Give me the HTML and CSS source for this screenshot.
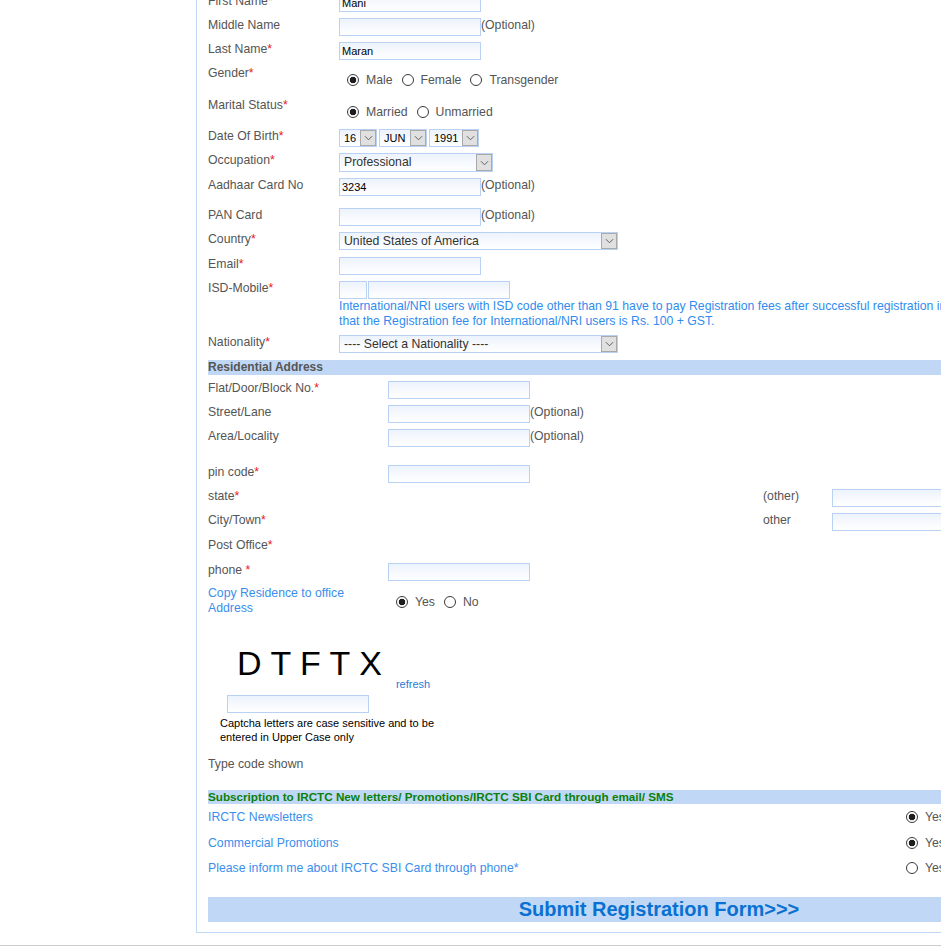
FILE: index.html
```html
<!DOCTYPE html>
<html>
<head>
<meta charset="utf-8">
<title>Registration</title>
<link rel="stylesheet" href="styles.css">
</head>
<body>
<div class="page">
  <div class="panel">
    <div class="form">
      <div class="row h24"><div class="lbl">First Name<span class="req">*</span></div><div class="fld"><input class="txt" value="Mani"></div></div>
      <div class="row h24"><div class="lbl">Middle Name</div><div class="fld"><input class="txt"><span class="opt-t">(Optional)</span></div></div>
      <div class="row h24"><div class="lbl">Last Name<span class="req">*</span></div><div class="fld"><input class="txt" value="Maran"></div></div>
      <div class="row h32"><div class="lbl">Gender<span class="req">*</span></div>
        <div class="radios">
          <label class="ropt"><input type="radio" name="g" checked><span>Male</span></label>
          <label class="ropt"><input type="radio" name="g"><span>Female</span></label>
          <label class="ropt"><input type="radio" name="g"><span>Transgender</span></label>
        </div>
      </div>
      <div class="row h31"><div class="lbl">Marital Status<span class="req">*</span></div>
        <div class="radios">
          <label class="ropt"><input type="radio" name="m" checked><span>Married</span></label>
          <label class="ropt"><input type="radio" name="m"><span>Unmarried</span></label>
        </div>
      </div>
      <div class="row h24"><div class="lbl">Date Of Birth<span class="req">*</span></div>
        <div class="fld dob">
          <span class="sel sm w38"><span class="v">16</span><span class="arr"><svg viewBox="0 0 10 6" width="9" height="6"><path d="M1 1 L5 5 L9 1" fill="none" stroke="#555" stroke-width="1"/></svg></span></span>
          <span class="sel sm w48"><span class="v">JUN</span><span class="arr"><svg viewBox="0 0 10 6" width="9" height="6"><path d="M1 1 L5 5 L9 1" fill="none" stroke="#555" stroke-width="1"/></svg></span></span>
          <span class="sel sm w50"><span class="v">1991</span><span class="arr"><svg viewBox="0 0 10 6" width="9" height="6"><path d="M1 1 L5 5 L9 1" fill="none" stroke="#555" stroke-width="1"/></svg></span></span>
        </div>
      </div>
      <div class="row h25"><div class="lbl">Occupation<span class="req">*</span></div>
        <div class="fld"><span class="sel w154 tall"><span class="v">Professional</span><span class="arr"><svg viewBox="0 0 10 6" width="9" height="6"><path d="M1 1 L5 5 L9 1" fill="none" stroke="#555" stroke-width="1"/></svg></span></span></div>
      </div>
      <div class="row h30"><div class="lbl">Aadhaar Card No</div><div class="fld"><input class="txt" value="3234"><span class="opt-t">(Optional)</span></div></div>
      <div class="row h24"><div class="lbl">PAN Card</div><div class="fld"><input class="txt"><span class="opt-t">(Optional)</span></div></div>
      <div class="row h25"><div class="lbl">Country<span class="req">*</span></div>
        <div class="fld"><span class="sel w279"><span class="v">United States of America</span><span class="arr"><svg viewBox="0 0 10 6" width="9" height="6"><path d="M1 1 L5 5 L9 1" fill="none" stroke="#555" stroke-width="1"/></svg></span></span></div>
      </div>
      <div class="row h24"><div class="lbl">Email<span class="req">*</span></div><div class="fld"><input class="txt"></div></div>
      <div class="row h54"><div class="lbl">ISD-Mobile<span class="req">*</span></div>
        <div class="fld col">
          <div class="isd"><input class="txt isdc"><input class="txt"></div>
          <div class="note"><span class="nl">International/NRI users with ISD code other than 91 have to pay Registration fees after successful registration in order to activate their User ID. Please note</span><span class="nl">that the Registration fee for International/NRI users is Rs. 100 + GST.</span></div>
        </div>
      </div>
      <div class="row h25"><div class="lbl">Nationality<span class="req">*</span></div>
        <div class="fld"><span class="sel w279"><span class="v">---- Select a Nationality ----</span><span class="arr"><svg viewBox="0 0 10 6" width="9" height="6"><path d="M1 1 L5 5 L9 1" fill="none" stroke="#555" stroke-width="1"/></svg></span></span></div>
      </div>

      <div class="bar">Residential Address</div>

      <div class="addr">
        <div class="arow h24"><div class="lbl">Flat/Door/Block No.<span class="req">*</span></div><div class="fld"><input class="txt"></div></div>
        <div class="arow h24"><div class="lbl">Street/Lane</div><div class="fld"><input class="txt"><span class="opt-t">(Optional)</span></div></div>
        <div class="arow h36"><div class="lbl">Area/Locality</div><div class="fld"><input class="txt"><span class="opt-t">(Optional)</span></div></div>
        <div class="arow h24"><div class="lbl">pin code<span class="req">*</span></div><div class="fld"><input class="txt"></div></div>
        <div class="arow h24"><div class="lbl">state<span class="req">*</span></div><div class="fld"></div><div class="lbl">(other)</div><div class="fld"><input class="txt"></div></div>
        <div class="arow h25"><div class="lbl">City/Town<span class="req">*</span></div><div class="fld"></div><div class="lbl">other</div><div class="fld"><input class="txt"></div></div>
        <div class="arow h25"><div class="lbl">Post Office<span class="req">*</span></div></div>
        <div class="arow h24"><div class="lbl">phone <span class="req">*</span></div><div class="fld"><input class="txt"></div></div>
        <div class="arow copy"><div class="lbl link">Copy Residence to office Address</div>
          <div class="radios cr">
            <label class="ropt"><input type="radio" name="c" checked><span>Yes</span></label>
            <label class="ropt"><input type="radio" name="c"><span>No</span></label>
          </div>
        </div>
      </div>

      <div class="captcha">
        <div class="cap-row"><span class="letters">D T F T X</span><a class="refresh">refresh</a></div>
        <input class="txt capin">
        <div class="cap-note">Captcha letters are case sensitive and to be<br>entered in Upper Case only</div>
      </div>
      <div class="typecode">Type code shown</div>

      <div class="bar green">Subscription to IRCTC New letters/ Promotions/IRCTC SBI Card through email/ SMS</div>
      <div class="subs">
        <div class="srow h26"><div class="link">IRCTC Newsletters</div><label class="ropt"><input type="radio" name="s1" checked><span>Yes</span></label></div>
        <div class="srow h25"><div class="link">Commercial Promotions</div><label class="ropt"><input type="radio" name="s2" checked><span>Yes</span></label></div>
        <div class="srow h25"><div class="link">Please inform me about IRCTC SBI Card through phone*</div><label class="ropt"><input type="radio" name="s3"><span>Yes</span></label></div>
      </div>

      <div class="submit"><span class="submit-t">Submit Registration Form&gt;&gt;&gt;</span></div>
    </div>
  </div>
  <div class="footer"></div>
</div>
</body>
</html>
```

FILE: styles.css
```css
html, body {
  margin: 0;
  padding: 0;
  background: #fff;
}
body {
  width: 941px;
  height: 949px;
  overflow: hidden;
  font-family: "Liberation Sans", Arial, sans-serif;
  font-size: 12.25px;
  color: #555;
}
.page {
  margin-top: -6px;
}
.panel {
  margin-left: 196px;
  width: 1000px;
  border-left: 1px solid #c0d8f5;
  border-bottom: 1px solid #c0d8f5;
  padding: 0 0 10px 11px;
}
.form {
  width: 902px;
}
.footer {
  margin-top: 12px;
  border-top: 1px solid #cccccc;
}

/* rows */
.row {
  display: grid;
  grid-template-columns: 131px 1fr;
  align-items: start;
}
.arow {
  display: grid;
  grid-template-columns: 180px 375px 69px 1fr;
  align-items: start;
}
.h24 { height: 24px; }
.h25 { height: 25px; }
.h26 { height: 26px; }
.h30 { height: 30px; }
.h31 { height: 31px; }
.h32 { height: 32px; }
.h36 { height: 36px; }
.h54 { height: 54px; }

.lbl {
  line-height: 13px;
  padding-top: 1px;
  white-space: nowrap;
}
.req {
  color: #e8141e;
}
.fld {
  display: flex;
  align-items: center;
}
.fld.col {
  flex-direction: column;
  align-items: flex-start;
}
.opt-t {
  align-self: flex-start;
  color: #555;
  line-height: 14px;
}

/* text inputs */
.txt {
  box-sizing: border-box;
  width: 142px;
  height: 18px;
  margin: 0;
  padding: 0 2px;
  border: 1px solid #b9d2f3;
  background: linear-gradient(to bottom, #edf3fc, #ffffff);
  font-family: "Liberation Sans", Arial, sans-serif;
  font-size: 11px;
  color: #000;
  outline: none;
}
.isd {
  display: flex;
  gap: 1px;
}
.isdc {
  width: 28px;
}
.note {
  color: #2f8cee;
  line-height: 15px;
  white-space: nowrap;
}
.nl {
  display: block;
}

/* select-like boxes */
.sel {
  box-sizing: border-box;
  display: inline-flex;
  align-items: stretch;
  height: 18px;
  border: 1px solid #b9d2f3;
  background: linear-gradient(to bottom, #edf3fc, #ffffff);
  color: #333;
}
.sel.tall {
  height: 19px;
}
.sel .v {
  flex: 1;
  padding-left: 4px;
  line-height: 16px;
  white-space: nowrap;
  overflow: hidden;
}
.sel.sm .v {
  font-size: 11px;
  color: #000;
}
.sel .arr {
  box-sizing: border-box;
  width: 16px;
  margin: 0;
  background: #e0e0e0;
  border: 1px solid #a9a9a9;
  display: flex;
  align-items: center;
  justify-content: center;
}
.dob {
  gap: 2px;
}
.w38 { width: 38px; }
.w48 { width: 48px; }
.w50 { width: 50px; }
.w154 { width: 154px; }
.w279 { width: 279px; }

/* radios */
.radios {
  display: flex;
  align-items: center;
  gap: 9px;
  padding: 7px 0 0 8px;
  height: 14px;
}
.ropt {
  display: inline-flex;
  align-items: center;
  gap: 7px;
  color: #555;
  line-height: 14px;
}
.ropt input {
  appearance: none;
  -webkit-appearance: none;
  box-sizing: border-box;
  width: 12px;
  height: 12px;
  margin: 0;
  border: 1px solid #3a3a3a;
  border-radius: 50%;
  background: #fff;
}
.ropt input:checked {
  background: radial-gradient(circle, #1e1e1e 0 3px, #fff 3.6px);
}

/* bars */
.bar {
  height: 15px;
  line-height: 15px;
  background: #c0d8f6;
  font-weight: bold;
  font-size: 12px;
  color: #555;
}
.addr {
  margin-top: 6px;
}
.link {
  color: #3a8eec;
}
.copy .lbl {
  white-space: normal;
  max-width: 145px;
  line-height: 15px;
  padding-top: 0;
  margin-top: -1px;
}
.radios.cr {
  padding-top: 8px;
  height: 14px;
}
.copy {
  height: 29px;
}

/* captcha */
.captcha {
  margin-top: 27px;
  padding-left: 12px;
}
.cap-row {
  display: flex;
  align-items: flex-start;
  height: 48px;
}
.letters {
  margin-left: 17px;
  font-size: 34px;
  line-height: 40px;
  color: #000;
  white-space: pre;
}
.refresh {
  margin: 35px 0 0 14px;
  font-size: 11px;
  line-height: 13px;
  color: #1f7cd8;
}
.capin {
  display: block;
  margin: 4px 0 0 7px;
}
.cap-note {
  margin-top: 3px;
  font-size: 11px;
  line-height: 14px;
  color: #000;
}
.typecode {
  margin-top: 13px;
  line-height: 14px;
}
.bar.green {
  margin-top: 19px;
  height: 14px;
  line-height: 14px;
  font-size: 11.7px;
  color: #0b800b;
}

/* subscriptions */
.subs {
  margin-top: 6px;
}
.srow {
  display: grid;
  grid-template-columns: 698px auto;
  align-items: start;
  line-height: 14px;
}

/* submit */
.submit {
  margin-top: 11px;
  height: 25px;
  line-height: 25px;
  background: #c0d8f6;
  text-align: center;
}
.submit-t {
  font-family: "Liberation Sans", Arial, sans-serif;
  font-weight: bold;
  font-size: 20px;
  color: #0a70d2;
}
```
